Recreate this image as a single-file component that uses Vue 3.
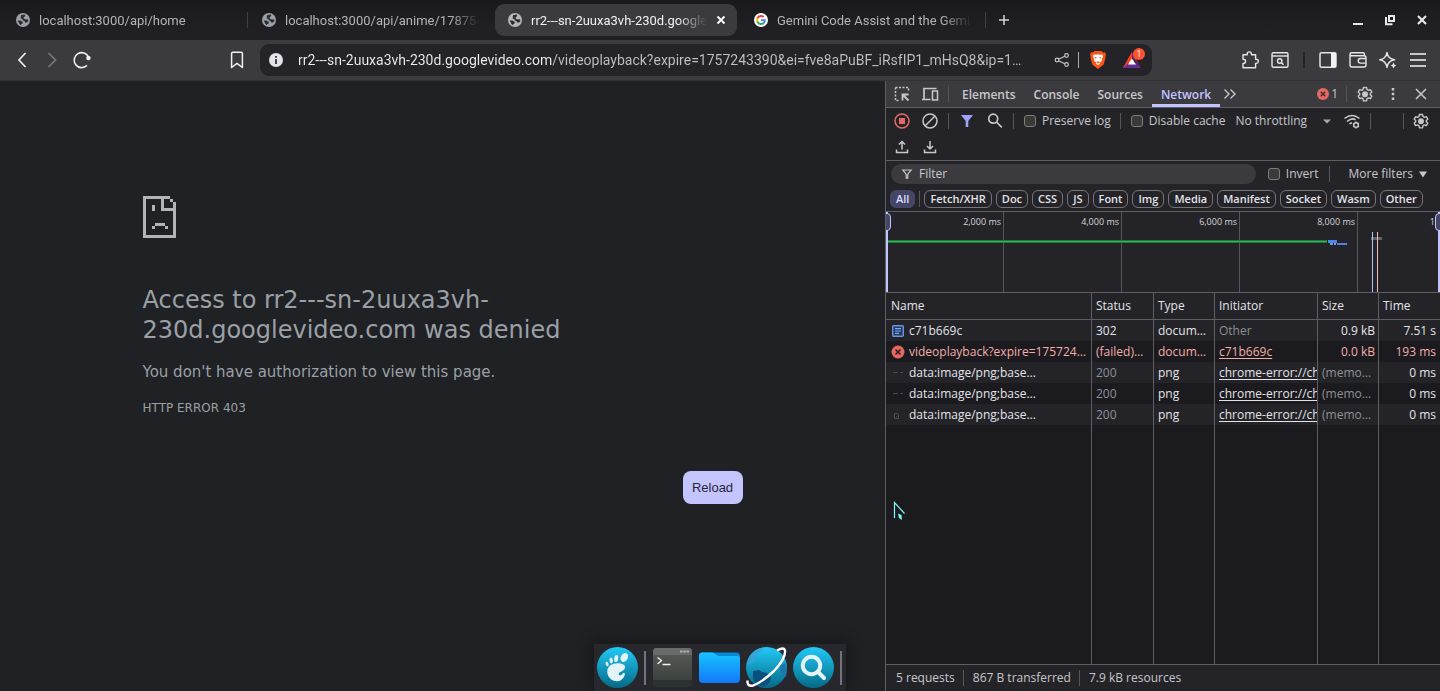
<script setup>
import { ref } from 'vue'

const tabs = [
  { title: 'localhost:3000/api/home', icon: 'globe' },
  { title: 'localhost:3000/api/anime/178754', icon: 'globe' },
  { title: 'rr2---sn-2uuxa3vh-230d.googlevideo.com', icon: 'globe', active: true },
  { title: 'Gemini Code Assist and the Gemini API', icon: 'google' }
]
const url = ref('rr2---sn-2uuxa3vh-230d.googlevideo.com/videoplayback?expire=1757243390&ei=fve8aPuBF_iRsfIP1_mHsQ8&ip=1…')
const panels = ['Elements', 'Console', 'Sources', 'Network']
const chips = ['Fetch/XHR', 'Doc', 'CSS', 'JS', 'Font', 'Img', 'Media', 'Manifest', 'Socket', 'Wasm', 'Other']
const ticks = ['2,000 ms', '4,000 ms', '6,000 ms', '8,000 ms']
const rows = [
  { icon: 'doc', name: 'c71b669c', status: '302', type: 'docum…', initiator: 'Other', size: '0.9 kB', time: '7.51 s' },
  { icon: 'error', name: 'videoplayback?expire=175724…', status: '(failed)…', type: 'docum…', initiator: 'c71b669c', link: true, size: '0.0 kB', time: '193 ms', failed: true },
  { icon: 'dash', name: 'data:image/png;base…', status: '200', type: 'png', initiator: 'chrome-error://ch', link: true, size: '(memo…', time: '0 ms', cached: true },
  { icon: 'dash', name: 'data:image/png;base…', status: '200', type: 'png', initiator: 'chrome-error://ch', link: true, size: '(memo…', time: '0 ms', cached: true },
  { icon: 'page', name: 'data:image/png;base…', status: '200', type: 'png', initiator: 'chrome-error://ch', link: true, size: '(memo…', time: '0 ms', cached: true }
]
</script>

<template>
  <div class="browser">
    <header class="strip">
      <template v-for="(t, i) in tabs" :key="i">
        <div class="tab" :class="{ active: t.active }">
          <svg v-if="t.icon === 'globe'" class="fav" viewBox="0 0 14 14">
            <circle cx="7" cy="7" r="7" :fill="t.active ? '#b4b6b8' : '#9aa0a6'" />
            <path d="M5 2.200 8.600 1.600 9.400 3 7.600 4.200 7.800 5.600 9.600 6.400 12 6.200 12.400 8 11 9.400 9.200 9.400 8.400 8 6.800 7.400 6.400 6 4.600 5.600 4.800 4Z" fill="#2b2b30" />
            <path d="M1.600 7.400 4.400 7.600 6.800 9 6.600 10.600 5.200 11.200 5 12.200 3.400 11 2.800 9.400Z" fill="#2b2b30" />
          </svg>
          <svg v-else class="fav" viewBox="0 0 14 14">
            <circle cx="7" cy="7" r="7" fill="#fff" />
            <g transform="translate(2 2) scale(.208)">
              <path fill="#ea4335" d="M24 9.5c3.54 0 6.71 1.22 9.21 3.6l6.85-6.85C35.9 2.38 30.47 0 24 0 14.62 0 6.51 5.38 2.56 13.22l7.98 6.19C12.43 13.72 17.74 9.5 24 9.5z" />
              <path fill="#4285f4" d="M46.98 24.55c0-1.57-.15-3.09-.38-4.55H24v9.02h12.94c-.58 2.96-2.26 5.48-4.78 7.18l7.73 6c4.51-4.18 7.09-10.36 7.09-17.65z" />
              <path fill="#fbbc05" d="M10.53 28.59a14.5 14.5 0 0 1 0-9.18l-7.98-6.19a24 24 0 0 0 0 21.56l7.98-6.19z" />
              <path fill="#34a853" d="M24 48c6.48 0 11.93-2.13 15.89-5.81l-7.73-6c-2.15 1.45-4.92 2.3-8.16 2.3-6.26 0-11.57-4.22-13.47-9.91l-7.98 6.19C6.51 42.62 14.62 48 24 48z" />
            </g>
          </svg>
          <span class="title">{{ t.title }}</span>
          <button v-if="t.active" class="plain close" aria-label="Close tab">
            <svg width="10" height="10" viewBox="0 0 10 10"><path d="M1.500 1.500l7 7M8.500 1.500l-7 7" stroke="#fff" stroke-width="1.800" /></svg>
          </button>
        </div>
        <i class="tabsep" :class="{ hidden: i === 1 || i === 2 }"></i>
      </template>
      <button class="plain plus" aria-label="New tab">
        <svg width="12" height="12" viewBox="0 0 12 12"><path d="M6 1v10M1 6h10" stroke="#d5d5d8" stroke-width="1.500" /></svg>
      </button>
      <div class="window">
        <button class="plain" aria-label="Minimize"><svg width="12" height="12" viewBox="0 0 12 12"><path d="M1 10h10" stroke="#e8e8ec" stroke-width="2" /></svg></button>
        <button class="plain" aria-label="Restore"><svg width="12" height="12" viewBox="0 0 12 12" fill="none" stroke="#e8e8ec"><rect x="5" y="2" width="5" height="5" stroke-width="2" /><path d="M2 3v7.200h6.500" stroke-width="2" /></svg></button>
        <button class="plain" aria-label="Close"><svg width="12" height="12" viewBox="0 0 12 12"><path d="M2 2l8 8M10 2l-8 8" stroke="#e8e8ec" stroke-width="2.200" /></svg></button>
      </div>
    </header>

    <nav class="bar">
      <button class="plain nav" aria-label="Back"><svg viewBox="0 0 20 20"><path d="M13.500 3 7 10l6.500 7" stroke="#f0f0f4" stroke-width="1.700" /></svg></button>
      <button class="plain nav" aria-label="Forward"><svg viewBox="0 0 20 20"><path d="m6.500 3 7 7-7 7" stroke="#77777c" stroke-width="1.700" /></svg></button>
      <button class="plain nav" aria-label="Reload"><svg viewBox="0 0 20 20"><path d="M15 15.400A7.500 7.500 0 1 1 16.600 7.200" stroke="#f0f0f4" stroke-width="1.600" /><circle cx="16.400" cy="8" r="2.200" fill="#f0f0f4" /></svg></button>
      <i class="gap-left"></i>
      <button class="plain nav mark" aria-label="Bookmark"><svg viewBox="0 0 20 20"><path d="M4.600 3.500q0-1.200 1.200-1.200h8.400q1.200 0 1.200 1.200v14L10 13.400l-5.400 4.100Z" stroke="#f0f0f4" stroke-width="1.500" stroke-linejoin="round" /></svg></button>
      <div class="omni">
        <svg class="info" viewBox="0 0 14 14"><circle cx="7" cy="7" r="7" fill="#e2e2e8" /><path d="M7 3v1.800M7 6v5" stroke="#333338" stroke-width="1.800" /></svg>
        <input v-model="url" class="url" aria-label="Address bar" spellcheck="false" />
        <button class="plain" aria-label="Share"><svg width="16" height="16" viewBox="0 0 16 16" fill="none" stroke="#c5c5ca" stroke-width="1.200"><circle cx="3" cy="8" r="1.800" /><circle cx="12.500" cy="3.500" r="1.800" /><circle cx="12.500" cy="12.500" r="1.800" /><path d="m4.600 7.200 6.200-3M4.600 8.800l6.200 3" /></svg></button>
        <i class="omnisep"></i>
        <button class="plain shield" aria-label="Brave Shields">
          <svg width="18" height="20" viewBox="0 0 18 20"><path d="M5.500 1h7l1.500 1.500 2-.2 1 2.500-.7 2 .2 1.200-2 6.700L9 19l-5.500-4.300-2-6.700.2-1.200-.7-2 1-2.500 2 .2Z" fill="#fb5413" /><path d="m9 4.300 1.800.5 2.400-.2.900 1.700-1.300 3 .2 1.400-1.800 1.300-.4 1.800L9 15.300l-1.800-1.500-.4-1.800L5 10.700l.2-1.400-1.300-3 .9-1.700 2.400.2Z" fill="#fff" /><path d="m5.500 6.700 2.200.8-.9 1.500Zm7 0-2.200.8.900 1.500ZM8 11.500h2l.7 1.200L9 13.500l-1.700-.8Z" fill="#fb5413" /></svg>
        </button>
        <button class="plain rewards" aria-label="Brave Rewards">
          <svg width="18" height="16" viewBox="0 0 18 16"><path d="M9 0 0 16l9-5.500Z" fill="#ff5a1f" /><path d="M9 0v5l5 6 4 5Z" fill="#9e1f63" /><path d="m0 16 5-5h8l5 5Z" fill="#662d91" /><path d="m9 5-5.500 8L0 16 9 0Z" fill="#ed3b2b" /><path d="m9 6.500-4 6h8Z" fill="#fff" /></svg>
          <span class="badge">1</span>
        </button>
      </div>
      <i class="gap-right"></i>
      <button class="plain nav" aria-label="Extensions"><svg viewBox="0 0 20 20"><path d="M3 4.700h4.200V4a2.100 2.100 0 0 1 4.200 0v.7h4.200v4.500h.6a2.100 2.100 0 0 1 0 4.200h-.6v4.300H3v-4.300h.5a2 2 0 0 0 0-4.200H3Z" stroke="#e6e6ea" stroke-width="1.400" stroke-linejoin="round" /></svg></button>
      <button class="plain nav" aria-label="Search page"><svg viewBox="0 0 20 20" stroke="#e6e6ea" stroke-width="1.400"><rect x="2" y="2.700" width="16" height="14.600" rx="1.500" /><path d="M2 6h16" /><circle cx="9.700" cy="11" r="2.200" /><path d="m11.300 12.600 2.200 2.200" /></svg></button>
      <i class="navsep"></i>
      <button class="plain nav" aria-label="Side panel"><svg viewBox="0 0 20 20"><rect x="2" y="2.700" width="16" height="14.600" rx="1.500" stroke="#e6e6ea" stroke-width="1.500" /><path d="M13 3h4q1 0 1 1v12q0 1-1 1h-4Z" fill="#f2f2f6" /></svg></button>
      <button class="plain nav" aria-label="Wallet"><svg viewBox="0 0 20 20" stroke="#e6e6ea" stroke-width="1.400"><path d="M2 4.500V15q0 2 2 2h12q2 0 2-2V7.500q0-1.800-2-1.800H3.500q-1.500 0-1.500-1.400T3.500 2.800H15q1.500 0 1.500 2.500" /><path d="M18 8.500h-5.500a2.300 2.300 0 0 0 0 4.600H18" /></svg></button>
      <button class="plain nav" aria-label="Leo"><svg viewBox="0 0 20 20"><path d="M9 2.500Q9.800 8.700 16.500 9.800 9.800 11 9 17.500 8 11 1.800 9.800 8 8.700 9 2.500Z" stroke="#e6e6ea" stroke-width="1.500" stroke-linejoin="round" /><path d="M15.500 12.500q.5 2.600 3 3-2.500.5-3 3-.5-2.500-3-3 2.500-.4 3-3" fill="#e6e6ea" /></svg></button>
      <button class="plain nav" aria-label="Menu"><svg viewBox="0 0 20 20"><path d="M2 4h16M2 10h16M2 16h16" stroke="#c8c8cc" stroke-width="1.800" /></svg></button>
    </nav>

    <div class="main">
      <main class="page">
        <section class="error">
          <svg class="sad" width="33" height="42" viewBox="0 0 33 42" shape-rendering="crispEdges" fill="#b4b4b4">
            <path d="M0 0h27v3h3v3h3v36H0ZM3 3v36h27V15H18V3ZM21 3v9h9V6h-3V3Z" fill-rule="evenodd" />
            <path d="M9 9h3v6H9ZM12 27h10v3H12ZM9 30h3v3H9ZM22 30h3v3h-3Z" />
          </svg>
          <h1>Access to rr2---sn-2uuxa3vh-230d.googlevideo.com was denied</h1>
          <p>You don't have authorization to view this page.</p>
          <div class="code">HTTP ERROR 403</div>
          <button class="reload">Reload</button>
        </section>
      </main>

      <aside class="dev">
        <div class="devtabs">
          <button class="plain tool" aria-label="Inspect"><svg viewBox="0 0 20 20"><path d="M3.500 3.500h13V8M3.500 3.500v13H8" stroke-dasharray="2 1.500" /><path d="M16.500 16.500 11 11M10.500 16.500v-6h6" stroke-width="1.800" /></svg></button>
          <button class="plain tool" aria-label="Device toolbar"><svg viewBox="0 0 20 20"><path d="M4 15V4.500h12.500M2 15.500h8.500" stroke-width="1.700" /><rect x="12.500" y="7" width="5" height="9" /></svg></button>
          <i class="vsep"></i>
          <button v-for="p in panels" :key="p" class="plain panel" :class="{ on: p === 'Network' }">{{ p }}</button>
          <button class="plain more" aria-label="More panels"><svg width="14" height="12" viewBox="0 0 14 12" fill="none" stroke="#c7c7cc" stroke-width="1.400"><path d="m1.500 1.500 4.500 4.500-4.500 4.500m6-9L12 6l-4.500 4.500" /></svg></button>
          <button class="plain count push"><svg width="12" height="12" viewBox="0 0 12 12"><circle cx="6" cy="6" r="6" fill="#e46962" /><path d="m3.800 3.800 4.400 4.400m0-4.400L3.800 8.200" stroke="#3c2a2d" stroke-width="1.300" /></svg>1</button>
          <i class="vsep"></i>
          <button class="plain tool" aria-label="Settings"><svg viewBox="-1 -1 22 22"><path d="M8.300 2.800h3.400l.4 2.200 1.700 1 2.100-.8 1.600 2.800-1.700 1.400v1.500l1.700 1.400-1.600 2.800-2.100-.8-1.700 1-.4 2.200H8.300l-.4-2.200-1.700-1-2.100.8-1.600-2.800 1.700-1.400V9.400L2.500 8l1.600-2.800 2.100.8 1.700-1Z" stroke-linejoin="round" /><circle cx="10" cy="10.200" r="2.500" fill="#c7c7cc" /></svg></button>
          <button class="plain tool" aria-label="Customize"><svg viewBox="0 0 20 20"><path d="M10 4v2.500m0 2.300v2.400m0 2.300V16" stroke-width="2.500" /></svg></button>
          <button class="plain tool" aria-label="Close DevTools"><svg viewBox="0 0 20 20"><path d="m5 5 10 10m0-10L5 15" /></svg></button>
        </div>

        <div class="tools">
          <div class="toolrow">
            <button class="plain tool" aria-label="Stop recording"><svg viewBox="0 0 20 20"><circle cx="10" cy="10" r="7" stroke="#e46962" /><rect x="7" y="7" width="6" height="6" fill="#e46962" stroke="none" /></svg></button>
            <button class="plain tool" aria-label="Clear"><svg viewBox="0 0 20 20"><circle cx="10" cy="10" r="7" /><path d="M15 5 5 15" /></svg></button>
            <i class="vsep"></i>
            <button class="plain tool" aria-label="Toggle filter"><svg viewBox="0 0 20 20"><path d="M4 4h12l-4.700 6v6H8.700v-6Z" fill="#a0a0ff" stroke="none" /></svg></button>
            <button class="plain tool" aria-label="Search"><svg viewBox="0 0 20 20"><circle cx="8.200" cy="7.700" r="4.500" stroke-width="1.700" /><path d="m11.500 11 5.300 5.300" stroke-width="1.700" /></svg></button>
            <i class="vsep"></i>
            <label class="check"><input type="checkbox" />Preserve log</label>
            <i class="vsep"></i>
            <label class="check">
              <input type="checkbox" />Disable cache
            </label>
            <span class="throttle">
              <select aria-label="Throttling"><option>No throttling</option></select>
              <svg width="8" height="5" viewBox="0 0 8 5"><path d="M0 .5h8l-4 4Z" fill="#a8a8ac" /></svg>
            </span>
            <button class="plain tool" aria-label="Network conditions"><svg viewBox="0 0 20 20"><path d="M2.500 7.500Q10 1.500 17.500 7.500M5 10.500q5-4 8.500-1.800M7.500 13q1-1 2.500-1" stroke-width="1.600" /><circle cx="14" cy="14" r="2.300" stroke-width="1.500" /><path d="M14 10.500v1m0 5v1M11 12.300l.8.500m4.400 2.500.8.500M11 15.700l.8-.5m4.400-2.500.8-.5" /></svg></button>
            <i class="vsep"></i>
            <i class="vsep push last"></i>
            <button class="plain tool" aria-label="Network settings"><svg viewBox="-1 -1 22 22"><path d="M8.300 2.800h3.400l.4 2.200 1.700 1 2.100-.8 1.600 2.800-1.700 1.400v1.500l1.700 1.400-1.600 2.800-2.100-.8-1.700 1-.4 2.200H8.300l-.4-2.200-1.700-1-2.100.8-1.600-2.800 1.700-1.400V9.400L2.500 8l1.600-2.800 2.100.8 1.700-1Z" stroke-linejoin="round" /><circle cx="10" cy="10.200" r="2.500" fill="#c7c7cc" /></svg></button>
          </div>
          <div class="toolrow">
            <button class="plain tool" aria-label="Import HAR"><svg viewBox="0 0 20 20"><path d="M10 12.500V5M7 7.500l3-3 3 3M4.500 12.500v3h11v-3" stroke-width="1.500" /></svg></button>
            <button class="plain tool" aria-label="Export HAR"><svg viewBox="0 0 20 20"><path d="M10 4v8M7 9l3 3 3-3M4.500 12.500v3h11v-3" stroke-width="1.500" /></svg></button>
          </div>
        </div>

        <div class="filters">
          <div class="filterrow">
            <label class="pill">
              <svg width="12" height="12" viewBox="0 0 12 12" fill="none" stroke="#c7c7cc" stroke-width="1.200"><path d="M1.800 2h8.400L6.800 6.200v4H5.200v-4Z" /></svg>
              <input type="text" placeholder="Filter" aria-label="Filter" />
            </label>
            <label class="check"><input type="checkbox" />Invert</label>
            <i class="vsep"></i>
            <button class="plain morefilters">More filters<svg width="8" height="7" viewBox="0 0 8 7"><path d="M0 .5h8L4 6.500Z" fill="#c7c7cc" /></svg></button>
          </div>
          <div class="chips">
            <button class="chip all">All</button>
            <i class="chipsep"></i>
            <button v-for="c in chips" :key="c" class="chip">{{ c }}</button>
          </div>
        </div>

        <div class="timeline">
          <div v-for="t in ticks" :key="t" class="tick">{{ t }}</div>
          <div class="tick rest">10</div>
          <svg class="chart" viewBox="0 0 554 80" preserveAspectRatio="none" shape-rendering="crispEdges">
            <path d="M2 28h439v3H2Z" fill="#1e7a3c" /><path d="M2 29h439v1H2Z" fill="#34b457" />
            <path d="M442 28h9v3h-9Zm9 3h10v2h-10Z" fill="#4a84e8" />
            <path d="M444 31h3v2h-3Z" fill="#35b8c8" /><path d="M448 31h2v2h-2Z" fill="#c478dc" />
            <path d="M485 25h11v3h-11Z" fill="#646468" />
            <path d="M486 20h1v60h-1Z" fill="#a8c7fa" /><path d="M491 20h1v60h-1Z" fill="#f2b8b5" />
            <path d="M0 0h2v80H0ZM552 0h2v80h-2Z" fill="#c3c3ff" />
          </svg>
          <i class="grip start"></i>
          <i class="grip end"></i>
        </div>

        <div class="gridwrap">
          <table class="grid">
            <colgroup><col /><col class="c2" /><col class="c3" /><col class="c4" /><col class="c5" /><col class="c6" /></colgroup>
            <thead>
              <tr><th>Name</th><th>Status</th><th>Type</th><th>Initiator</th><th>Size</th><th>Time</th></tr>
            </thead>
            <tbody>
              <tr v-for="(r, i) in rows" :key="i" class="row" :class="{ failed: r.failed, cached: r.cached }">
                <td>
                  <div class="name">
                    <svg width="14" height="14" viewBox="0 0 14 14">
                      <g v-if="r.icon === 'doc'"><rect x="1.700" y="1.700" width="10.600" height="10.600" rx="1" fill="#26385e" stroke="#6a94e4" stroke-width="1.400" /><path d="M4 4.700h6M4 7h6M4 9.300h4" stroke="#7ea8f4" stroke-width="1.200" /></g>
                      <g v-else-if="r.icon === 'error'"><circle cx="7" cy="7" r="6.500" fill="#e46962" /><path d="m4.500 4.500 5 5m0-5-5 5" stroke="#2c1c20" stroke-width="1.600" /></g>
                      <path v-else-if="r.icon === 'dash'" d="M2 6.500h5m2 0h3" stroke="#4c4c50" />
                      <path v-else d="M3.500 5.500h3l1 1v4h-4ZM5 8.500h1" fill="none" stroke="#4c4c50" />
                    </svg>
                    <span>{{ r.name }}</span>
                  </div>
                </td>
                <td class="status">{{ r.status }}</td>
                <td>{{ r.type }}</td>
                <td class="init"><a v-if="r.link" href="#">{{ r.initiator }}</a><span v-else class="dim">{{ r.initiator }}</span></td>
                <td class="size">{{ r.size }}</td>
                <td class="num">{{ r.time }}</td>
              </tr>
              <tr class="fill"><td></td><td></td><td></td><td></td><td></td><td></td></tr>
            </tbody>
          </table>
        </div>

        <footer class="summary"><span>5 requests</span><span>867 B transferred</span><span>7.9 kB resources</span></footer>
      </aside>
    </div>

    <svg class="cursor" width="14" height="22" viewBox="0 0 14 22"><path d="M1.500 17V1.500L11.500 12.500" fill="none" stroke="#7df5f0" stroke-width="1.200" /><path d="M5 12.500 8.500 14 9 19l-3-2Z" fill="#7df5f0" /></svg>

    <div class="dock">
      <svg class="app" viewBox="0 0 41 41">
        <defs><linearGradient id="cyan" x1="0" y1="0" x2="0" y2="1"><stop offset="0" stop-color="#22c9f7" /><stop offset="1" stop-color="#046a86" /></linearGradient></defs>
        <circle cx="20.500" cy="20.500" r="20.500" fill="url(#cyan)" />
        <g fill="#e2f4f8">
          <ellipse cx="27.300" cy="10.500" rx="3.400" ry="4.700" transform="rotate(25 27.300 10.500)" />
          <ellipse cx="19.200" cy="11.500" rx="2" ry="3.600" transform="rotate(8 19.200 11.500)" />
          <ellipse cx="14.200" cy="13.500" rx="1.700" ry="2.900" transform="rotate(-12 14.200 13.500)" />
          <ellipse cx="10.100" cy="17" rx="1.400" ry="2.300" transform="rotate(-20 10.100 17)" />
          <path d="M20.500 16.200c6 0 9 2.500 7 5.800-1.500 2.500-6 3-5.800 5.200.2 1.700 2.500 1.300 4-.8 1-1.500 2.700-.7 2 1.500-1.200 4.500-5.700 7-9.700 6.200C13 33 10 28.500 10.300 24c.4-5 4.500-7.800 10.200-7.800Z" />
        </g>
      </svg>
      <i class="docksep"></i>
      <svg class="app" viewBox="0 0 41 41">
        <defs><linearGradient id="term" x1="0" y1="0" x2="0" y2="1"><stop offset="0" stop-color="#595b59" /><stop offset=".8" stop-color="#3e4340" /><stop offset="1" stop-color="#29302f" /></linearGradient></defs>
        <rect x="1" y="1" width="39" height="39" rx="3.500" fill="url(#term)" /><path d="M1 8V4.500Q1 1 4.500 1h32Q40 1 40 4.500V8Z" fill="#696b68" /><path d="M1 33h39v3.500q0 3.500-3.500 3.500h-32Q1 40 1 36.500Z" fill="#2b3231" />
        <path d="M28 4.500h2.500m.7 0h2.500m.7 0h2.500" stroke="#aeb0ad" stroke-width="2" /><path d="m5.500 10.500 4 3-4 3.500M10.500 17.500h8" fill="none" stroke="#f2f2f2" stroke-width="1.300" />
      </svg>
      <svg class="app" viewBox="0 0 41 41">
        <defs><linearGradient id="folder" x1="0" y1="0" x2="0" y2="1"><stop offset="0" stop-color="#16c4ff" /><stop offset="1" stop-color="#1478f8" /></linearGradient></defs>
        <path d="M3 5.500h34q4 0 4 4V14H0V8.500q0-3 3-3Z" fill="#0788d6" /><path d="M0 9q0-3.500 3.500-3.500h10q1.500 0 3 1.700T20 9h18q3 0 3 3v20q0 4-4 4H4q-4 0-4-4Z" fill="url(#folder)" />
      </svg>
      <svg class="app" viewBox="0 0 41 41">
        <circle cx="20.500" cy="20.500" r="20.500" fill="url(#cyan)" />
        <path d="M5 7.500Q10 1 18 .5L16 5l-5 2-1 5-5 5-4 1Q1 12 5 7.500Z" fill="#3f9fd8" opacity=".7" /><path d="m7 24 6-1 3 2 5 1 4 4-1 5-6 5Q8 38 7 31Z" fill="#0b4f7c" /><path d="m33 19 6-3q4 6 0 15l-4-5Z" fill="#1c78a8" />
        <path d="M31 3.500Q38-.5 39 3.500 40 11 28 24 15 36 7 38.500 1 40 1.500 33.500" fill="none" stroke="#fff" stroke-width="2.400" />
      </svg>
      <svg class="app" viewBox="0 0 41 41"><circle cx="20.500" cy="20.500" r="20.500" fill="url(#cyan)" /><circle cx="18.500" cy="18.500" r="8.700" fill="none" stroke="#e2f4f8" stroke-width="4" /><path d="m25 25 6 6" stroke="#e2f4f8" stroke-width="4" stroke-linecap="round" /></svg>
      <i class="docksep"></i>
    </div>
  </div>
</template>

<style>
html, body { margin: 0; background: #202124; }
</style>

<style scoped>
* { box-sizing: border-box; }
.browser { position: relative; display: flex; flex-direction: column; height: 100vh; overflow: hidden; font-family: "Open Sans", "Noto Sans", sans-serif; color: #c7c7cc; }
.plain { appearance: none; background: none; border: 0; padding: 0; margin: 0; font: inherit; color: inherit; display: flex; align-items: center; justify-content: center; }
svg { display: block; flex: none; }
i { flex: none; }

.strip { display: flex; align-items: center; height: 40px; flex: none; padding-left: 3px; background: linear-gradient(#19191b, #202024 70%); font-family: Roboto, "Open Sans", sans-serif; font-size: 13px; }
.tab { display: flex; align-items: center; gap: 9px; flex: 0 1 242px; min-width: 0; height: 32px; padding: 0 11px 0 13px; border-radius: 9px; color: #b4b4b8; }
.tab.active { background: #3b3b3f; color: #f0f0f4; }
.fav { width: 14px; height: 14px; }
.title { flex: 1; min-width: 0; overflow: hidden; white-space: nowrap; mask-image: linear-gradient(90deg, #000 calc(100% - 30px), transparent); }
.tabsep { width: 1px; height: 16px; margin: 0 1px 0 2px; background: #3f3f43; }
.tabsep.hidden { background: none; }
.plus { width: 34px; height: 34px; }
.window { display: flex; margin-left: auto; gap: 20px; padding-right: 12px; }

.bar { display: flex; align-items: center; height: 41px; flex: none; padding: 0 7px; background: #3b3b3f; border-bottom: 1px solid #323236; }
.nav { width: 30px; height: 30px; flex: none; }
.nav svg { width: 20px; height: 20px; fill: none; }
.gap-left { flex: 125 1 0; }
.gap-right { flex: 83 1 0; }
.mark { margin-right: 8px; }
.navsep { width: 2px; height: 16px; margin: 0 8px; background: #222226; }
.omni { display: flex; align-items: center; flex: 873 1 0; min-width: 0; height: 32px; padding: 0 10px 0 9px; border-radius: 9px; background: #242428; }
.info { width: 14px; height: 14px; }
.url { flex: 1; min-width: 0; margin: 0 12px 0 15px; padding: 0; border: 0; outline: 0; font: 14px Roboto, "Open Sans", sans-serif; color: transparent; background: linear-gradient(90deg, #f0f0f4 254px, #c0c0c5 254px); background-clip: text; text-overflow: ellipsis; }
.omnisep { width: 1px; height: 16px; margin: 0 10px 0 8px; background: #aaaab0; }
.rewards { position: relative; width: 20px; height: 24px; margin-left: 15px; }
.badge { position: absolute; top: 0; right: -3px; width: 12px; height: 12px; border-radius: 6px; background: #ff5230; color: #fff; font-size: 9px; line-height: 12px; text-align: center; }

.main { display: grid; grid-template-columns: 885fr 555fr; flex: 1; min-height: 0; }
.page { min-width: 0; padding: 115px 40px 0; background: #202124; font-family: "DejaVu Sans", sans-serif; color: #9aa0a6; overflow: hidden; }
.error { display: flex; flex-direction: column; max-width: 600px; margin: 0 auto; }
h1 { margin: 47px 0 0; max-width: 480px; font-size: 24px; line-height: 30px; font-weight: 400; }
.error p { margin: 16px 0 0; font-size: 15px; line-height: 23px; }
.code { margin-top: 15px; font-size: 12px; line-height: 18px; }
.reload { align-self: flex-end; margin-top: 54px; height: 33px; width: 60px; padding: 0; border: 0; border-radius: 8px; background: #c4c4ff; color: #26263a; font: 13px "Liberation Sans", sans-serif; }

.dev { display: flex; flex-direction: column; min-width: 0; min-height: 0; border-left: 1px solid #5e5e62; background: #242428; font-size: 12px; line-height: 16px; }
.tool { width: 28px; height: 26px; flex: none; }
.tool svg { width: 20px; height: 20px; fill: none; stroke: #c7c7cc; stroke-width: 1.500; }
.vsep { width: 1px; height: 16px; margin: 0 4px; background: #56565a; }
.push { margin-left: auto; }
.devtabs { display: flex; align-items: center; flex: none; height: 27px; padding: 0 5px 0 2px; background: #3b3b3f; border-bottom: 1px solid #5e5e62; }
.panel { align-self: stretch; padding: 2px 9px 0; font-weight: 600; border-bottom: 3px solid transparent; border-top: 3px solid transparent; }
.panel.on { color: #c3c3ff; border-bottom-color: #c3c3ff; }
.more { width: 20px; height: 26px; }
.count { gap: 2px; margin-right: 4px; }
.tools { flex: none; border-bottom: 1px solid #5e5e62; }
.toolrow { display: flex; align-items: center; height: 26px; padding: 0 5px 0 2px; white-space: nowrap; }
.check { display: flex; align-items: center; gap: 6px; padding: 0 5px 0 6px; white-space: nowrap; }
.check input { appearance: none; width: 12px; height: 12px; margin: 0; border: 1px solid #7c7c78; border-radius: 3px; background: #3a3a38; }
.throttle { display: flex; align-items: center; justify-content: space-between; width: 96px; margin: 0 7px 0 5px; }
.throttle select { appearance: none; border: 0; padding: 0; background: none; font: inherit; color: inherit; }
.last { margin-right: 3px; }

.filters { flex: none; border-bottom: 1px solid #5e5e62; }
.filterrow { display: flex; align-items: center; height: 26px; padding: 0 13px 0 5px; }
.pill { display: flex; align-items: center; gap: 6px; flex: 1; min-width: 0; height: 20px; margin-right: 6px; padding: 0 10px; border-radius: 10px; background: #3b3b3f; }
.pill input { flex: 1; min-width: 0; border: 0; padding: 0; background: none; outline: 0; font: inherit; color: inherit; }
.pill input::placeholder { color: #c7c7cc; }
.morefilters { gap: 6px; margin-left: 14px; white-space: nowrap; }
.filterrow .vsep { margin-left: 6px; }
.chips { display: flex; align-items: center; gap: 4px; height: 24px; padding: 0 4px; }
.chip { height: 18px; padding: 0 5px; border: 1px solid #757579; border-radius: 6px; background: none; color: #e3e3e8; font: 600 11px/16px "Open Sans", "Noto Sans", sans-serif; white-space: nowrap; }
.chip.all { border-color: #454566; background: #454566; color: #dedeff; }
.chipsep { width: 1px; height: 16px; background: #56565a; }

.timeline { position: relative; display: flex; flex: none; height: 80px; overflow: hidden; font-size: 9px; line-height: 20px; }
.tick { flex: 115 1 0; min-width: 0; padding-right: 2px; border-right: 1px solid #56565a; text-align: right; white-space: nowrap; color: #d5d5da; }
.tick.rest { flex-grow: 82; border: 0; padding-right: 0; }
.chart { position: absolute; inset: 0; width: 100%; height: 100%; }
.grip { position: absolute; top: 1px; width: 6px; height: 18px; border: 1px solid #c3c3ff; background: #454566; }
.grip.start { left: -1px; border-radius: 0 4px 4px 0; }
.grip.end { right: -1px; border-radius: 4px 0 0 4px; }

.gridwrap { flex: 1; min-height: 0; background: #1b1b1f; border-top: 1px solid #5e5e62; }
.grid { width: 100%; height: 100%; table-layout: fixed; border-collapse: separate; border-spacing: 0; }
.c2 { width: 62px; } .c3 { width: 61px; } .c4 { width: 103px; } .c5 { width: 61px; } .c6 { width: 62px; }
th, td { padding: 0 4px; text-align: left; overflow: hidden; white-space: nowrap; border-left: 1px solid #5e5e62; }
th:first-child, td:first-child { border-left: 0; padding-left: 5px; }
th { height: 27px; font-weight: 400; color: #e3e3e8; background: #242428; border-bottom: 1px solid #5e5e62; }
.row { height: 21px; color: #e3e3e8; }
.row td { height: 21px; }
.row:nth-child(odd) { background: #242428; }
.failed { color: #f3aea8; }
.name { display: flex; align-items: center; gap: 4px; }
.cached .status, .cached .size, .dim { color: #8f8f94; }
.num, .size { text-align: right; }
.num { padding-right: 4px; padding-left: 0; }
.size { padding-right: 3px; }
.cached .size { text-align: left; }
.init { padding-right: 0; }
.init a { display: block; overflow: hidden; color: inherit; text-decoration: underline; text-underline-offset: 2px; }
.summary { display: flex; align-items: center; flex: none; height: 27px; border-top: 1px solid #5e5e62; padding-left: 2px; }
.summary span { padding: 0 8px; white-space: nowrap; }
.summary span + span { border-left: 1px solid #56565a; padding-left: 9px; }

.cursor { position: absolute; left: 893px; top: 501px; }
.dock { position: absolute; left: 50%; bottom: 0; transform: translateX(-50%); display: flex; gap: 6px; height: 48px; padding: 3px 4px 3px 3px; background: #27272e; border-top: 1px solid #1b1b1e; box-shadow: 0 0 14px 2px rgba(0, 0, 0, .35); }
.app { width: 41px; height: 41px; }
.docksep { width: 2px; height: 34px; margin-top: 4px; background: #737378; }
</style>
